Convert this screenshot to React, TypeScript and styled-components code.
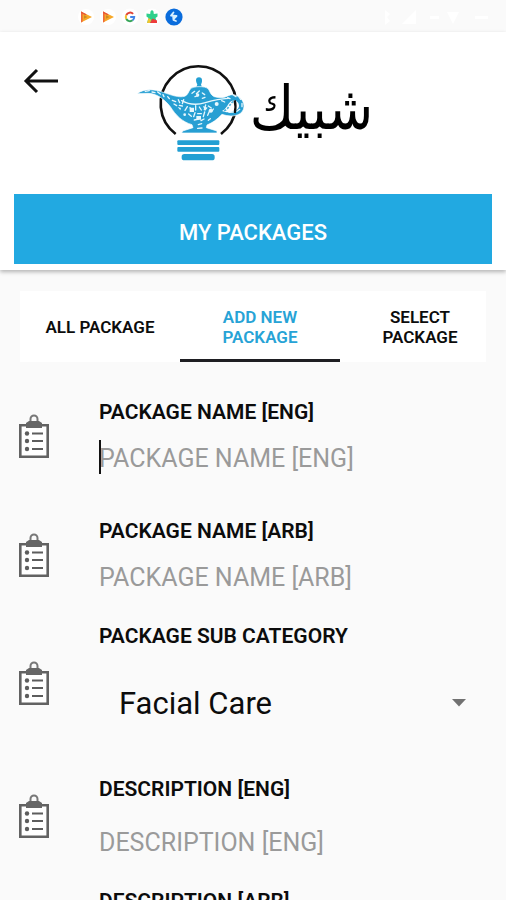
import React from "react";
import styled, { createGlobalStyle } from "styled-components";

const GlobalStyle = createGlobalStyle`
  *, *::before, *::after { box-sizing: border-box; }
  html { scrollbar-width: none; }
  body {
    margin: 0;
    background: #fafafa;
    color: #0c0c0c;
    font-family: Roboto, "Liberation Sans", sans-serif;
  }
  button, input, select { font: inherit; color: inherit; }
`;

const Screen = styled.div`
  display: flex;
  flex-direction: column;
  min-height: 100vh;
`;

const StatusBar = styled.div`
  display: flex;
  justify-content: space-between;
  align-items: center;
  height: 32px;
  padding: 2px 12px 0 77px;
`;

const StatusIcons = styled.div`
  display: flex;
  align-items: center;
  gap: 4px;
  svg { display: block; }
`;

const Header = styled.header`
  background: #fff;
  padding: 0 14px 6px;
  box-shadow: 0 2px 4px rgba(0, 0, 0, 0.28);
`;

const BrandBar = styled.div`
  display: grid;
  grid-template-columns: 1fr auto 1fr;
  align-items: start;
  height: 162px;
`;

const BackButton = styled.button`
  justify-self: start;
  margin: 33px 0 0 8px;
  padding: 0;
  border: 0;
  background: none;
  svg { display: block; }
`;

const Brand = styled.div`
  display: flex;
  align-items: flex-start;
  gap: 4px;
  padding: 31px 0 0 2px;
  svg { display: block; }
`;

const BrandName = styled.span`
  font-family: "DejaVu Sans Condensed", "DejaVu Sans", sans-serif;
  font-size: 60px;
  line-height: 90px;
  color: #000;
`;

const Title = styled.h1`
  display: flex;
  align-items: center;
  justify-content: center;
  height: 70px;
  margin: 0;
  padding-top: 6px;
  background: #22a9e1;
  color: #fff;
  font-size: 22px;
  font-weight: 500;
`;

const Tabs = styled.nav`
  display: flex;
  margin: 21px 20px 0;
  background: #fff;
  overflow: hidden;
`;

const Tab = styled.button<{ $active?: boolean }>`
  flex: 0 0 160px;
  height: 71px;
  padding: 0 24px;
  border: 0;
  box-shadow: ${(p) => (p.$active ? "inset 0 -3px #1e1e22" : "none")};
  background: none;
  color: ${(p) => (p.$active ? "#27a3d6" : "#0c0c0c")};
  font-size: 17px;
  font-weight: 600;
  line-height: 20px;
  white-space: nowrap;
`;

const Form = styled.form`
  display: flex;
  flex-direction: column;
  padding: 38px 20px 24px 18px;
`;

const FieldRow = styled.div<{ $after: number }>`
  display: grid;
  grid-template-columns: 32px 1fr;
  column-gap: 49px;
  align-items: center;
  margin-bottom: ${(p) => p.$after}px;
  svg { display: block; }
`;

const FieldBody = styled.div<{ $gap: number }>`
  display: flex;
  flex-direction: column;
  gap: ${(p) => p.$gap}px;
  min-width: 0;
`;

const Label = styled.label`
  font-size: 21px;
  font-weight: 600;
  line-height: 24px;
`;

const InputWrap = styled.div`
  position: relative;
  display: flex;
`;

const Caret = styled.span`
  position: absolute;
  left: 0;
  top: -5px;
  width: 2px;
  height: 34px;
  background: #111;
`;

const TextInput = styled.input`
  width: 100%;
  height: 28px;
  padding: 0;
  border: 0;
  outline: 0;
  background: none;
  font-size: 25px;
  line-height: 28px;
  &::placeholder { color: #9a9a9a; opacity: 1; }
`;

const SelectWrap = styled.div`
  display: flex;
  align-items: center;
  height: 82px;
  padding-right: 20px;
`;

const Select = styled.select`
  appearance: none;
  flex: 1;
  min-width: 0;
  height: 82px;
  padding: 0 0 0 20px;
  border: 0;
  background: none;
  font-size: 31px;
`;

const PlayIcon = () => (
  <svg width="18" height="18" viewBox="0 0 18 18" aria-hidden="true">
    <circle cx="9" cy="9" r="8" fill="#fff" />
    <path d="M4 3.5v11l11-5.5z" fill="#f7a827" />
    <path d="M4 3.5v11l1.6-.9V4.4z" fill="#ee6a3c" />
    <path d="M4 3.5l5.5 2.8-1 .9L4 5z" fill="#e8543c" />
    <path d="M7 7.2l3.4 1.8L7 10.8z" fill="#c98a25" />
  </svg>
);

const GoogleIcon = () => (
  <svg width="18" height="18" viewBox="0 0 18 18" aria-hidden="true">
    <circle cx="9" cy="9" r="8.5" fill="#fff" />
    <g fill="none" strokeWidth="2">
      <path d="M12.1 5.9A4.2 4.2 0 0 0 5.3 7" stroke="#e04437" />
      <path d="M5.3 7a4.2 4.2 0 0 0 0 4" stroke="#f3bd2c" />
      <path d="M5.3 11a4.2 4.2 0 0 0 6.3 1.3" stroke="#35a457" />
      <path d="M11.6 12.3A4.2 4.2 0 0 0 13.2 9H9.2" stroke="#4285e8" />
    </g>
  </svg>
);

const PuzzleIcon = () => (
  <svg width="18" height="18" viewBox="0 0 18 18" aria-hidden="true">
    <circle cx="9" cy="9" r="8.5" fill="#fff" />
    <path d="M3.5 5.5L7.2 6L7.5 3.5Q9 1 10.5 3.5L10.8 6L14.5 5.5V8.5L12.5 10L14 15H4L5.5 10L3.5 8.5Z" fill="#2fd08c" />
    <path d="M5.5 10L8 11.5L7.5 15H4z" fill="#f1c531" />
    <path d="M7 15l2.5-4.5L14 12.5V15z" fill="#ee3b3b" />
  </svg>
);

const ShazamIcon = () => (
  <svg width="18" height="18" viewBox="0 0 18 18" aria-hidden="true">
    <circle cx="9" cy="9" r="8.6" fill="#0a6cdc" />
    <path d="M8.5 4.5L6 7.5L11.5 8M8 7.5L8.5 12L11 13M11.5 8L9 10.5" fill="none" stroke="#d9efff" strokeWidth="1.8" strokeLinecap="round" strokeLinejoin="round" />
  </svg>
);

const SystemIcons = () => (
  <svg width="114" height="18" viewBox="0 0 114 18" fill="#fff" aria-hidden="true">
    <path d="M5 2l5 4-3 3 3 4-5 4V2z" />
    <path d="M22 16L36 2v14z" />
    <path d="M50 8h9v3h-9z" />
    <path d="M67 4h12l-6 12z" />
    <path d="M95 8h13v3H95z" />
  </svg>
);

const BackArrow = () => (
  <svg width="38" height="32" viewBox="0 0 38 32" fill="none" stroke="#111" strokeWidth="3" aria-hidden="true">
    <path d="M36 16H4M15 5L4 16l11 11" />
  </svg>
);

const LampLogo = () => (
  <svg width="111" height="111" viewBox="20 20 333 333" role="img" aria-label="Magic lamp">
    <path d="M142 233A113 113 0 1 1 278 233" fill="none" stroke="#111" strokeWidth="8" />
    <path d="M203 72A9 9 0 1 1 221 72Q222 79 218 85L221 91H204L207 85Q203 79 203 72Z" fill="#239fd3" />
    <path
      d="M26 112C48 96 78 98 105 108C134 118 151 124 169 120C179 116 181 105 186 98C194 89 231 88 240 98C246 107 246 115 258 121C276 125 287 125 300 118C322 107 347 128 347 149C347 176 315 186 281 174C266 190 253 199 236 206L234 214L266 224V230H160L163 224L194 214L191 205C160 196 142 176 126 151C107 128 85 111 58 111Q40 111 26 112Z"
      fill="#279fd3"
      stroke="#fff"
      strokeWidth="2"
    />
    <path d="M281 164C296 157 299 141 308 135C321 128 333 138 332 150C330 166 301 173 281 164Z" fill="#fff" />
    <path d="M319 132Q324 150 319 170" fill="none" stroke="#111" strokeWidth="7" />
    <path d="M287 163C301 161 306 137 316 135" fill="none" stroke="#54b5dd" strokeWidth="5" strokeDasharray="7 4" />
    <g fill="none" stroke="#e7f7fd" strokeWidth="4" strokeLinecap="round">
      <path d="M51 105l12-2m8 4l9 2m8-2l8 6m8 2l3 6m11 0l5 6" />
      <path d="M132 132l10 4m-5 7l8 5m5-18l4 9m12-9l-4 12m-9 5l9 2" />
      <path d="M160 133Q192 151 231 139T300 126" />
      <path d="M191 111l8-6m5 7l9-8m9 6l7 5m-29 6l9-3m13 8l8-3" />
      <path d="M177 151l-7 11m15-8l9 9m8-15v13m11-9l6 9m13-15l-4 14m12-11l9 6" />
      <path d="M181 173l8 7m11-11l-4 12m12-9h11m10-5l-4 14m19-18l-6 14m17-19l-5 8" />
      <path d="M198 191l13-3m7 5l9-5m13 4l6-5m-36 18l10-3m-12 14l13-1" />
      <path d="M280 133l9 4m9-13l7 3m10-11l8 5m8-1l6 9m4 12v10m-7 8l-8 6m-11 2l-13 1" />
    </g>
    <g fill="#e7f7fd">
      <path d="M184 154h13v13h-13zM224 149l14 5-8 10zM204 179h14v11h-14zM148 152l10 3-2 7z" />
      <circle cx="208" cy="116" r="5" />
      <circle cx="247" cy="163" r="6" />
      <circle cx="169" cy="175" r="4" />
      <circle cx="265" cy="143" r="6" />
    </g>
    <g fill="#229fd3">
      <rect x="147" y="252" width="126" height="14" rx="3" />
      <rect x="147" y="272" width="126" height="14" rx="3" />
      <rect x="160" y="293" width="99" height="19" rx="8" />
    </g>
  </svg>
);

const ClipboardIcon = () => (
  <svg width="32" height="46" viewBox="0 0 32 46" aria-hidden="true">
    <path d="M2.3 11.3h27.4v31.4H2.3z" fill="#fff" stroke="#626262" strokeWidth="2.6" />
    <path d="M12.5 8V5a3.5 3.5 0 0 1 7 0V8" fill="none" stroke="#777" strokeWidth="2" />
    <path d="M11 7h10l3 2v5H8V9z" fill="#666" />
    <g fill="#5d5d5d">
      <circle cx="9" cy="19.5" r="2.2" />
      <circle cx="9" cy="27" r="2.2" />
      <circle cx="9" cy="35" r="2.2" />
      <path d="M14 18.5h11v2H14zM14 26h11v2H14zM14 34h11v2H14z" />
    </g>
  </svg>
);

type Field = { id: string; label: string; gap: number; after: number; focused?: boolean };

const nameFields: Field[] = [
  { id: "name-eng", label: "PACKAGE NAME [ENG]", gap: 21, after: 46, focused: true },
  { id: "name-arb", label: "PACKAGE NAME [ARB]", gap: 21, after: 32 },
];

const descriptionFields: Field[] = [
  { id: "desc-eng", label: "DESCRIPTION [ENG]", gap: 28, after: 32 },
  { id: "desc-arb", label: "DESCRIPTION [ARB]", gap: 28, after: 32 },
];

const TextField = ({ id, label, gap, after, focused }: Field) => (
  <FieldRow $after={after}>
    <ClipboardIcon />
    <FieldBody $gap={gap}>
      <Label htmlFor={id}>{label}</Label>
      <InputWrap>
        <TextInput id={id} type="text" placeholder={label} />
        {focused && <Caret />}
      </InputWrap>
    </FieldBody>
  </FieldRow>
);

export default function App() {
  return (
    <Screen>
      <GlobalStyle />
      <StatusBar>
        <StatusIcons>
          <PlayIcon />
          <PlayIcon />
          <GoogleIcon />
          <PuzzleIcon />
          <ShazamIcon />
        </StatusIcons>
        <SystemIcons />
      </StatusBar>
      <Header>
        <BrandBar>
          <BackButton type="button" aria-label="Back">
            <BackArrow />
          </BackButton>
          <Brand>
            <LampLogo />
            <BrandName lang="ar" dir="rtl">شبيك</BrandName>
          </Brand>
        </BrandBar>
        <Title>MY PACKAGES</Title>
      </Header>
      <Tabs>
        <Tab type="button">ALL PACKAGE</Tab>
        <Tab type="button" $active>
          ADD NEW
          <br />
          PACKAGE
        </Tab>
        <Tab type="button">
          SELECT
          <br />
          PACKAGE
        </Tab>
      </Tabs>
      <Form>
        {nameFields.map((f) => (
          <TextField key={f.id} {...f} />
        ))}
        <FieldRow $after={33}>
          <ClipboardIcon />
          <FieldBody $gap={14}>
            <Label htmlFor="sub-category">PACKAGE SUB CATEGORY</Label>
            <SelectWrap>
              <Select id="sub-category" defaultValue="Facial Care">
                <option>Facial Care</option>
              </Select>
              <svg width="14" height="8" viewBox="0 0 14 8" aria-hidden="true">
                <path d="M0 0h14L7 7.5z" fill="#717171" />
              </svg>
            </SelectWrap>
          </FieldBody>
        </FieldRow>
        {descriptionFields.map((f) => (
          <TextField key={f.id} {...f} />
        ))}
      </Form>
    </Screen>
  );
}
